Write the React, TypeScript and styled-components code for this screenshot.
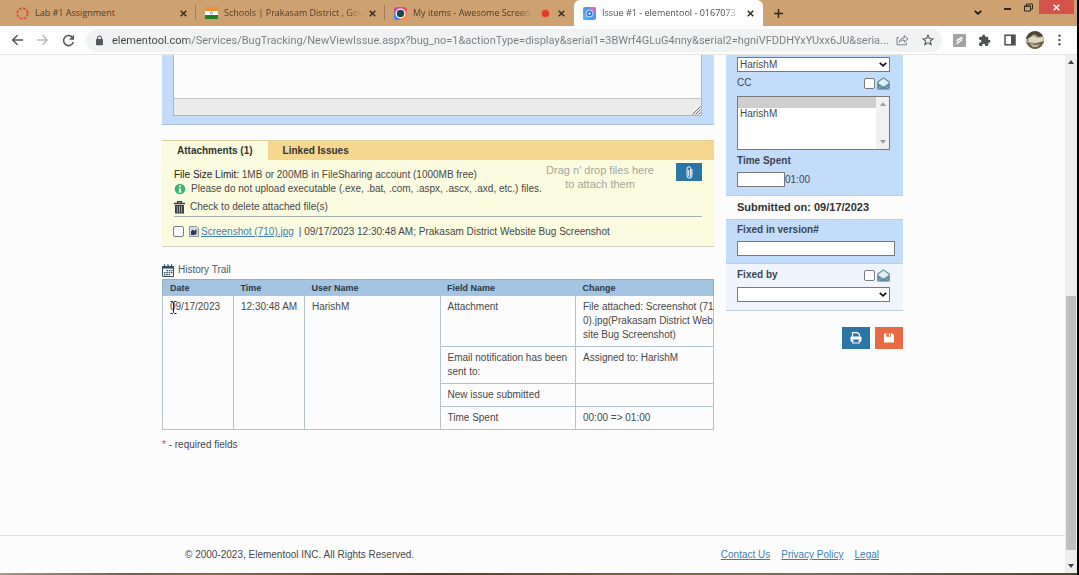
import React from "react";
import styled, { createGlobalStyle } from "styled-components";

const GlobalStyle = createGlobalStyle`
  *, *::before, *::after { box-sizing: border-box; }
  body { margin: 0; background: #fcfcfd; }
  button, input, select, textarea { font: inherit; color: inherit; margin: 0; border-radius: 0; }
  button { border: 0; padding: 0; background: none; }
`;

const arial = `"Liberation Sans", Arial, sans-serif`;

const Desktop = styled.div`
  min-height: 100vh;
  display: flex;
  flex-direction: column;
  border-right: 2px solid #000;
  font: 10px/14px ${arial};
  color: #484848;
`;

/* ---------- browser chrome ---------- */

const TabStrip = styled.div`
  display: flex;
  align-items: stretch;
  height: 26px;
  padding-left: 7px;
  background: #cda270;
  color: #4d3c2a;
  font: 9px/14px "Open Sans", "Noto Sans", sans-serif;
`;

const Tab = styled.div<{ $active?: boolean; $divider?: boolean }>`
  position: relative;
  flex: 0 1 189px;
  min-width: 0;
  display: flex;
  align-items: center;
  gap: 6px;
  padding: 0 9px 0 9px;
  background: ${(p) => (p.$active ? "#fdfdfd" : "transparent")};
  color: ${(p) => (p.$active ? "#4f4f52" : "inherit")};
  border-radius: 6px 6px 0 0;
  &::after {
    content: "";
    display: ${(p) => (p.$divider ? "block" : "none")};
    position: absolute;
    right: 0;
    top: 5px;
    height: 15px;
    width: 1px;
    background: #a17e56;
  }
`;

const TabTitle = styled.span<{ $fade?: boolean }>`
  flex: 1;
  min-width: 0;
  white-space: nowrap;
  mask-image: ${(p) => (p.$fade ? "linear-gradient(90deg, #000 calc(100% - 16px), transparent)" : "none")};
`;

const IconButton = styled.button<{ $w?: number }>`
  display: flex;
  align-items: center;
  justify-content: center;
  flex: none;
  width: ${(p) => p.$w ?? 8}px;
`;

const WindowControls = styled.div`
  display: flex;
  align-items: flex-start;
  margin-left: auto;
  padding-right: 3px;
`;

const WindowButton = styled(IconButton)<{ $close?: boolean; $tall?: boolean }>`
  height: ${(p) => (p.$tall ? 25 : 14)}px;
  background: ${(p) => (p.$close ? "#d4544b" : "none")};
`;

const Toolbar = styled.div`
  display: flex;
  align-items: center;
  height: 29px;
  padding: 0 7px 0 5px;
  background: #fdfdfd;
  border-bottom: 1px solid #e6e6e6;
  color: #5c5f62;
`;

const AddressBar = styled.div`
  flex: 1;
  min-width: 0;
  display: flex;
  align-items: center;
  height: 23px;
  margin: 0 5px 0 5px;
  padding: 0 2px 0 9px;
  border-radius: 12px;
  background: #f1f3f2;
`;

const Url = styled.input`
  flex: 1;
  min-width: 0;
  height: 20px;
  margin-left: 8px;
  padding: 1px 0 0;
  border: 0;
  outline: 0;
  font: 11px/18px Roboto, "Open Sans", sans-serif;
  color: transparent;
  background: linear-gradient(90deg, #3f4144 77px, #777b7e 77px);
  background-clip: text;
`;

const Avatar = styled.span`
  display: block;
  width: 18px;
  height: 18px;
  border-radius: 50%;
  overflow: hidden;
`;

/* ---------- page ---------- */

const Viewport = styled.div`
  flex: 1;
  display: flex;
`;

const Page = styled.div`
  flex: 1;
  min-width: 0;
  display: flex;
  flex-direction: column;
  background: #fcfcfd;
`;

const Columns = styled.main`
  width: 100%;
  max-width: 741px;
  margin: 0 auto;
  display: flex;
  gap: 12px;
`;

const MainColumn = styled.div`
  flex: 1;
  min-width: 0;
`;

const SideColumn = styled.aside`
  flex: 0 0 177px;
`;

const DescriptionPanel = styled.section`
  background: #c2dcfa;
  border-bottom: 1px solid #a9c0d8;
  padding: 0 12px 8px 11px;
`;

const Editor = styled.div`
  border: 1px solid #a8b6c4;
  border-top: 0;
`;

const EditorText = styled.textarea`
  display: block;
  width: 100%;
  height: 43px;
  border: 0;
  resize: none;
  background: #fcfcfd;
`;

const EditorFooter = styled.div`
  display: flex;
  justify-content: flex-end;
  align-items: flex-end;
  height: 17px;
  border-top: 1px solid #c4c4c4;
  background: #ebebeb;
`;

const Attachments = styled.section`
  margin-top: 15px;
  background: #fbfbdf;
  border-top: 1px solid #dccb9c;
  border-bottom: 1px solid #cfcfc0;
`;

const PanelTabs = styled.div`
  display: flex;
  height: 19px;
  background: #f5d78f;
`;

const PanelTab = styled.button<{ $active?: boolean }>`
  padding: 0 15px;
  font-weight: bold;
  color: #333;
  background: ${(p) => (p.$active ? "#fbfbdf" : "transparent")};
`;

const UploadArea = styled.div`
  display: flex;
  align-items: flex-start;
  margin: 0 12px;
  padding: 3px 0 2px;
  border-bottom: 1px solid #a9b0ae;
`;

const UploadNotes = styled.div`
  flex: 1;
  padding-top: 5px;
`;

const Line = styled.div<{ $gap?: number; $top?: number }>`
  display: flex;
  align-items: center;
  gap: ${(p) => p.$gap ?? 5}px;
  margin-top: ${(p) => p.$top ?? 0}px;
`;

const Strong = styled.span`
  color: #222;
`;

const DropHint = styled.div`
  margin: 0 22px 0 0;
  font-size: 11px;
  text-align: center;
  color: #a5a69c;
`;

const ActionButton = styled.button<{ $tone?: string; $small?: boolean }>`
  display: flex;
  align-items: center;
  justify-content: center;
  width: ${(p) => (p.$small ? 26 : 28)}px;
  height: ${(p) => (p.$small ? 18 : 22)}px;
  background: ${(p) => p.$tone ?? "#2c76a5"};
`;

const FileRow = styled.div`
  display: flex;
  align-items: center;
  gap: 5px;
  height: 29px;
  padding: 0 11px;
`;

const CheckBox = styled.input.attrs({ type: "checkbox" })`
  appearance: none;
  flex: none;
  width: 11px;
  height: 11px;
  background: #fff;
  border: 1px solid #77797c;
  border-radius: 2px;
`;

const FileName = styled.span`
  display: flex;
  align-items: center;
  gap: 2px;
`;

const Link = styled.a`
  color: #3f7fb0;
  text-decoration: underline;
`;

const HistoryHeading = styled.h2`
  display: flex;
  align-items: center;
  gap: 4px;
  height: 14px;
  margin: 16px 0 2px;
  font-size: 10px;
  font-weight: normal;
  color: #4b5966;
`;

const HistoryTable = styled.table`
  width: 100%;
  table-layout: fixed;
  border-collapse: collapse;
  border: 1px solid #93aec2;
`;

const Th = styled.th<{ $w?: string }>`
  width: ${(p) => p.$w ?? "auto"};
  height: 16px;
  padding: 0 7px;
  font-size: 9px;
  text-align: left;
  background: #a4c3e0;
  color: #2a3a48;
`;

const Td = styled.td`
  position: relative;
  padding: 4px 0 4px 7px;
  vertical-align: top;
  border: 1px solid #b3c4d0;
`;

const ChangeTd = styled(Td)`
  white-space: pre;
`;

const Caret = styled.svg`
  position: absolute;
  left: 7px;
  top: 5px;
`;

const Required = styled.p`
  margin: 8px 0;
  & > span { color: #e03c31; }
`;

const SideBlock = styled.section<{ $light?: boolean; $pad: string }>`
  padding: ${(p) => p.$pad};
  background: ${(p) => (p.$light ? "#f0f5fd" : "#c2dcfa")};
  border-bottom: 1px solid #bccddd;
`;

const FieldHeader = styled.div<{ $plain?: boolean }>`
  display: flex;
  align-items: center;
  justify-content: space-between;
  height: 14px;
  font-weight: ${(p) => (p.$plain ? "normal" : "bold")};
  color: #3a4653;
`;

const Notify = styled.span`
  display: flex;
  align-items: center;
  align-self: flex-end;
  gap: 2px;
`;

const SelectFrame = styled.div`
  position: relative;
  height: 15px;
  & > svg { position: absolute; right: 3px; top: 5px; pointer-events: none; }
`;

const Select = styled.select`
  display: block;
  appearance: none;
  width: 100%;
  height: 15px;
  padding: 0 2px;
  background: #fff;
  border: 1px solid #76797c;
`;

const ListFrame = styled.div`
  display: flex;
  height: 54px;
  margin: 6px 0 4px;
  background: #fff;
  border: 1px solid #76797c;
`;

const ListBox = styled.select`
  flex: 1;
  min-width: 0;
  padding: 0;
  border: 0;
  outline: 0;
  overflow: hidden;
  background: transparent;
  & option { height: 11px; min-height: 11px; padding: 0 2px; line-height: 11px; }
`;

const ListScroll = styled.div`
  display: flex;
  flex-direction: column;
  justify-content: space-between;
  align-items: center;
  width: 13px;
  padding: 5px 0;
  background: #f1f1f1;
`;

const TextBox = styled.input<{ $w?: string }>`
  width: ${(p) => p.$w ?? "100%"};
  height: 15px;
  padding: 0 2px;
  background: #fff;
  border: 1px solid #76797c;
`;

const Submitted = styled.p`
  margin: 0;
  padding: 4px 11px 5px;
  font-size: 11px;
  font-weight: bold;
  color: #333;
  border-bottom: 1px solid #bccddd;
`;

const Actions = styled.div`
  display: flex;
  justify-content: flex-end;
  gap: 5px;
  margin-top: 16px;
`;

const Footer = styled.footer`
  margin-top: auto;
  border-top: 1px solid #e3e3e4;
`;

const FooterInner = styled.div`
  display: flex;
  justify-content: space-between;
  max-width: 741px;
  margin: 0 auto;
  padding: 12px 24px 11px 23px;
`;

const FooterLinks = styled.nav`
  display: flex;
  gap: 11px;
`;

const PageScroll = styled.div`
  display: flex;
  flex-direction: column;
  align-items: center;
  width: 12px;
  padding: 5px 0;
  background: #eeeeef;
`;

const Track = styled.div`
  flex: 1;
  display: flex;
  flex-direction: column;
  justify-content: flex-end;
  width: 10px;
  padding: 6px 0 14px;
`;

const Thumb = styled.div`
  height: 53%;
  background: #bfbfc0;
`;

const TaskbarEdge = styled.div`
  height: 2px;
  background: linear-gradient(90deg, #a59a86, #6f604d 12%, #8a6a3a 20%, #5a4028 40%, #7d6a3c 62%, #77705f 75%, #4d4a2c);
`;

/* ---------- icons ---------- */

const Close = ({ color = "#33281c" }: { color?: string }) => (
  <svg width="7" height="7" viewBox="0 0 7 7"><path d="M.7.7l5.6 5.6M6.3.7L.7 6.3" stroke={color} strokeWidth="1.4" /></svg>
);

const Triangle = ({ down, color = "#444" }: { down?: boolean; color?: string }) => (
  <svg width="6" height="4" viewBox="0 0 6 4"><path d={down ? "M0 0h6L3 4z" : "M0 4h6L3 0z"} fill={color} /></svg>
);

const Chevron = () => (
  <svg width="8" height="5" viewBox="0 0 8 5"><path d="M.8.8L4 3.8 7.2.8" fill="none" stroke="#111" strokeWidth="1.7" /></svg>
);

const Envelope = () => (
  <svg width="13" height="13" viewBox="0 0 13 13">
    <path d="M.8 5L6.5.9 12.2 5v7H.8z" fill="#e2eff6" stroke="#5d8496" strokeWidth="1.1" strokeLinejoin="round" />
    <path d="M.8 6v6.200h11.400V6L6.500 9.600z" fill="#5d8ba0" />
    <path d="M1 12l3.800-3.200M12 12L8.200 8.800" stroke="#a9c6d4" strokeWidth=".7" />
  </svg>
);

const Canvas = () => (
  <svg width="13" height="13" viewBox="0 0 13 13">
    <circle cx="6.5" cy="6.5" r="5.2" fill="none" stroke="#e0533a" strokeWidth="2" strokeDasharray="2.8 1.28" />
  </svg>
);

const Flag = () => (
  <svg width="13" height="12" viewBox="0 0 13 12">
    <path d="M0 0h13v4H0z" fill="#f6902f" /><path d="M0 4h13v4H0z" fill="#fff" /><path d="M0 8h13v4H0z" fill="#1c8222" />
    <circle cx="6.5" cy="6" r="1.1" fill="none" stroke="#6f80b8" strokeWidth=".7" />
  </svg>
);

const Awesome = () => (
  <svg width="13" height="13" viewBox="0 0 13 13">
    <defs><linearGradient id="aw" x1="0" y1="0" x2="1" y2="1"><stop offset="0" stopColor="#b04bd8" /><stop offset=".5" stopColor="#ef4b6a" /><stop offset="1" stopColor="#f7a93b" /></linearGradient></defs>
    <rect width="13" height="13" rx="3" fill="url(#aw)" /><path d="M0 6v4a3 3 0 003 3h3z" fill="#3d8df0" />
    <circle cx="6.5" cy="6.5" r="5" fill="#fff" /><circle cx="6.5" cy="6.5" r="3.7" fill="#24464b" />
  </svg>
);

const Elementool = () => (
  <svg width="13" height="13" viewBox="0 0 13 13">
    <rect width="13" height="13" rx="2" fill="#4d9bf0" /><path d="M5 0h6a2 2 0 012 2v5z" fill="#d667c4" /><path d="M0 5v6a2 2 0 002 2h4z" fill="#4fb8ea" />
    <circle cx="6.5" cy="6.5" r="3.4" fill="#2f6fe8" stroke="#a9d3fb" strokeWidth="1.2" /><circle cx="6.5" cy="6.5" r="1.2" fill="#d7ecff" />
  </svg>
);

const Recording = () => (
  <svg width="11" height="11" viewBox="0 0 11 11"><circle cx="5.5" cy="5.5" r="4.8" fill="#e08a60" /><circle cx="5.5" cy="5.5" r="3.6" fill="#df3a22" /></svg>
);

const Arrow = ({ forward }: { forward?: boolean }) => (
  <svg width="13" height="12" viewBox="0 0 13 12">
    <path d={forward ? "M1 6h10M6.5 1.2L11.3 6l-4.8 4.8" : "M12 6H2M6.5 1.2L1.7 6l4.8 4.8"} fill="none" stroke={forward ? "#b9bbbd" : "#55585b"} strokeWidth="1.5" />
  </svg>
);

const Reload = () => (
  <svg width="13" height="13" viewBox="0 0 13 13"><path d="M10.6 3.6A5 5 0 1011.4 8" fill="none" stroke="#55585b" strokeWidth="1.5" /><path d="M12 .8v5H7z" fill="#55585b" /></svg>
);

const Lock = () => (
  <svg width="9" height="11" viewBox="0 0 9 11"><rect x="1" y="4" width="7" height="6.3" rx=".8" fill="#55585b" /><path d="M2.6 4.4V2.9a1.9 1.9 0 013.8 0v1.5" fill="none" stroke="#55585b" strokeWidth="1.1" /></svg>
);

const Share = () => (
  <svg width="13" height="12" viewBox="0 0 13 12"><path d="M3 3.5H1v7.3h9.4V8.6" fill="none" stroke="#7a7d80" /><path d="M3.4 8.3C3.8 5.4 5.5 4 8.2 3.9V1.6L12 5 8.2 8.2V6C6.200 6 4.600 6.600 3.400 8.300z" fill="none" stroke="#7a7d80" strokeLinejoin="round" /></svg>
);

const Star = () => (
  <svg width="12" height="12" viewBox="0 0 24 24"><path d="M12 2.500l2.900 6.600 7.100.6-5.400 4.700 1.600 7L12 17.700l-6.200 3.700 1.600-7L2 9.700l7.100-.6z" fill="none" stroke="#55585b" strokeWidth="2.200" /></svg>
);

const Extension = () => (
  <svg width="13" height="13" viewBox="0 0 13 13"><rect width="13" height="13" rx="1" fill="#a2a3a4" /><path d="M3.500 5.800L9.300 2.500v2.300L3.500 7.600zM9.500 6.300L3.700 10.600V8.500l5.800-3.200z" fill="#fff" /></svg>
);

const Puzzle = () => (
  <svg width="13" height="13" viewBox="0 0 24 24"><path d="M20.500 11H19V7a2 2 0 00-2-2h-4V3.500a2.500 2.500 0 00-5 0V5H4a2 2 0 00-2 2v3.800h1.500a2.700 2.700 0 010 5.400H2V20a2 2 0 002 2h3.800v-1.500a2.700 2.700 0 015.400 0V22H17a2 2 0 002-2v-4h1.500a2.500 2.500 0 000-5z" fill="#4f5255" /></svg>
);

const SidePanel = () => (
  <svg width="12" height="12" viewBox="0 0 12 12"><rect x="1" y="1.200" width="10" height="9.600" fill="none" stroke="#4f5255" strokeWidth="1.500" /><path d="M7 1h4v10H7z" fill="#4f5255" /></svg>
);

const Dots = () => (
  <svg width="3" height="12" viewBox="0 0 3 12"><circle cx="1.500" cy="1.700" r="1.200" fill="#55585b" /><circle cx="1.500" cy="6" r="1.200" fill="#55585b" /><circle cx="1.500" cy="10.300" r="1.200" fill="#55585b" /></svg>
);

const Portrait = () => (
  <svg width="18" height="18" viewBox="0 0 18 18">
    <path d="M0 0h18v18H0z" fill="#aca08c" /><path d="M0 0h18v5L13 6 8 3 3 7 0 8z" fill="#4c4437" /><path d="M3 7l4-2 4 2 6-1v4l-7 2-7-1z" fill="#dfd6c4" /><path d="M0 11l6 2 6-1 6-2v8H0z" fill="#6b5f4e" /><path d="M4 13l6 1 4-1-3 3H7z" fill="#c7b9a1" />
  </svg>
);

const Info = () => (
  <svg width="12" height="12" viewBox="0 0 12 12"><circle cx="6" cy="6" r="5.300" fill="#3eb573" /><circle cx="6" cy="3.300" r="1" fill="#fff" /><path d="M4.600 5.200h2.200v3.400h.8v.9H4.500v-.9h.7V6.100h-.6z" fill="#fff" /></svg>
);

const Trash = () => (
  <svg width="11" height="13" viewBox="0 0 11 13"><path d="M0 2.500h11M3.600 2.200V.7h3.800v1.500" fill="none" stroke="#363b45" strokeWidth="1.300" /><path d="M1 4h9v8.500H1z" fill="#363b45" /><path d="M3.300 5v6.500M5.500 5v6.500M7.700 5v6.500" stroke="#c8c9bc" strokeWidth=".8" /></svg>
);

const ImageFile = () => (
  <svg width="10" height="11" viewBox="0 0 10 11"><path d="M.5.500h7l2 2v8h-9z" fill="#d9dde3" stroke="#8d95a0" /><path d="M2 9V5l2-1.500 1 1.500 2.500-2V8L5 9z" fill="#2f3c55" /></svg>
);

const Clip = () => (
  <svg width="7" height="13" viewBox="0 0 7 13"><path d="M5.900 3v6.800a2.400 2.400 0 01-4.800 0V2.600a1.800 1.800 0 013.600 0v6.800a1 1 0 01-2 0V4" fill="none" stroke="#fff" strokeWidth="1" /></svg>
);

const Calendar = () => (
  <svg width="12" height="13" viewBox="0 0 12 13">
    <path d="M.5 2.500h11v10H.5z" fill="#f3f6f8" stroke="#34505f" />
    <path d="M0 2h12v2.600H0z" fill="#34505f" />
    <path d="M2.500.3v2.500M6 .3v2.500M9.500.3v2.500" stroke="#34505f" strokeWidth="1.300" />
    <path d="M4.500 6.600h6M2 8.600h8.500M2 10.600h6" stroke="#34505f" strokeWidth="1.100" strokeDasharray="1.500 .8" />
  </svg>
);

const Printer = () => (
  <svg width="12" height="12" viewBox="0 0 12 12"><path d="M2.500 5V.700h5L9.500 2.500V5" fill="none" stroke="#fff" strokeWidth="1.200" /><path d="M.5 5.500a1 1 0 011-1h9a1 1 0 011 1v4h-2v-2h-7v2h-2z" fill="#fff" /><path d="M2.800 8v3h6.400V8" fill="none" stroke="#fff" strokeWidth="1.200" /></svg>
);

const Save = () => (
  <svg width="10" height="10" viewBox="0 0 10 10"><path d="M0 .5h8.500L10 2v7.500H0z" fill="#fff" /><path d="M2.300.5h4.800v3.200H2.300z" fill="#e86a45" /><path d="M4.900 1h1.300v2.200H4.900z" fill="#fff" /></svg>
);

const Grip = () => (
  <svg width="9" height="9" viewBox="0 0 9 9"><path d="M.5 8.500l8-8M3.500 8.500l5-5M6.500 8.500l2-2" stroke="#6d6d6d" /></svg>
);

/* ---------- data ---------- */

const tabs = [
  { title: "Lab #1 Assignment", icon: <Canvas />, divider: true },
  { title: "Schools | Prakasam District , Gov", icon: <Flag />, divider: true, fade: true },
  { title: "My items - Awesome Screen", icon: <Awesome />, recording: true, fade: true },
  { title: "Issue #1 - elementool - 0167073", icon: <Elementool />, active: true, fade: true },
];

const changes = [
  ["Attachment", "File attached: Screenshot (71\n0).jpg(Prakasam District Web\nsite Bug Screenshot)"],
  ["Email notification has been sent to:", "Assigned to: HarishM"],
  ["New issue submitted", ""],
  ["Time Spent", "00:00 => 01:00"],
];

function BrowserBars() {
  return (
    <header>
      <TabStrip>
        {tabs.map((t) => (
          <Tab key={t.title} $active={t.active} $divider={t.divider}>
            {t.icon}
            <TabTitle $fade={t.fade}>{t.title}</TabTitle>
            {t.recording && <Recording />}
            <IconButton aria-label="Close tab"><Close /></IconButton>
          </Tab>
        ))}
        <IconButton $w={30} aria-label="New tab">
          <svg width="9" height="9" viewBox="0 0 9 9"><path d="M4.500 0v9M0 4.500h9" stroke="#33281c" strokeWidth="1.500" /></svg>
        </IconButton>
        <WindowControls>
          <WindowButton $w={36} $tall aria-label="Search tabs"><Chevron /></WindowButton>
          <WindowButton $w={22} aria-label="Minimize">
            <svg width="7" height="8" viewBox="0 0 7 8"><path d="M0 6h7" stroke="#33281c" strokeWidth="2" /></svg>
          </WindowButton>
          <WindowButton $w={21} aria-label="Restore">
            <svg width="9" height="9" viewBox="0 0 9 9"><path d="M.5 3h6v5h-6zM2.500 3V1h6v5h-2" fill="none" stroke="#33281c" /><path d="M.5 3.200h6" stroke="#33281c" /></svg>
          </WindowButton>
          <WindowButton $w={35} $close aria-label="Close window"><Close color="#fff" /></WindowButton>
        </WindowControls>
      </TabStrip>
      <Toolbar>
        <IconButton $w={25} aria-label="Back"><Arrow /></IconButton>
        <IconButton $w={25} aria-label="Forward"><Arrow forward /></IconButton>
        <IconButton $w={26} aria-label="Reload"><Reload /></IconButton>
        <AddressBar>
          <Lock />
          <Url
            aria-label="Address"
            readOnly
            value="elementool.com/Services/BugTracking/NewViewIssue.aspx?bug_no=1&actionType=display&serial1=3BWrf4GLuG4nny&serial2=hgniVFDDHYxYUxx6JU&seria..."
          />
          <IconButton $w={25} aria-label="Share"><Share /></IconButton>
          <IconButton $w={25} aria-label="Bookmark"><Star /></IconButton>
        </AddressBar>
        <IconButton $w={25} aria-label="Extension"><Extension /></IconButton>
        <IconButton $w={25} aria-label="Extensions"><Puzzle /></IconButton>
        <IconButton $w={25} aria-label="Side panel"><SidePanel /></IconButton>
        <IconButton $w={26} aria-label="Profile"><Avatar><Portrait /></Avatar></IconButton>
        <IconButton $w={22} aria-label="Menu"><Dots /></IconButton>
      </Toolbar>
    </header>
  );
}

function History() {
  return (
    <section>
      <HistoryHeading><Calendar />History Trail</HistoryHeading>
      <HistoryTable>
        <thead>
          <tr>
            <Th $w="71px">Date</Th>
            <Th $w="71px">Time</Th>
            <Th>User Name</Th>
            <Th>Field Name</Th>
            <Th $w="138px">Change</Th>
          </tr>
        </thead>
        <tbody>
          {changes.map(([field, change], i) => (
            <tr key={field}>
              {i === 0 && (
                <>
                  <Td rowSpan={4}>
                    09/17/2023
                    <Caret width="7" height="13" viewBox="0 0 7 13"><path d="M.5.500h2l1 1 1-1h2M3.500 1.500v10M.5 12.500h2l1-1 1 1h2" fill="none" stroke="#222" /></Caret>
                  </Td>
                  <Td rowSpan={4}>12:30:48 AM</Td>
                  <Td rowSpan={4}>HarishM</Td>
                </>
              )}
              <Td>{field}</Td>
              <ChangeTd>{change}</ChangeTd>
            </tr>
          ))}
        </tbody>
      </HistoryTable>
      <Required><span>*</span> - required fields</Required>
    </section>
  );
}

function Sidebar() {
  return (
    <SideColumn>
      <SideBlock $pad="2px 13px 8px 11px">
        <SelectFrame>
          <Select aria-label="Assigned to"><option>HarishM</option></Select>
          <Chevron />
        </SelectFrame>
        <Line $top={4} />
        <FieldHeader $plain>
          <label htmlFor="cc">CC</label>
          <Notify><CheckBox aria-label="Notify CC" /><Envelope /></Notify>
        </FieldHeader>
        <ListFrame>
          <ListBox id="cc" multiple size={4} defaultValue={[""]}>
            <option value="" />
            <option>HarishM</option>
          </ListBox>
          <ListScroll><Triangle color="#a0a0a0" /><Triangle down color="#a0a0a0" /></ListScroll>
        </ListFrame>
        <FieldHeader><label htmlFor="spent">Time Spent</label></FieldHeader>
        <Line $gap={0} $top={4}><TextBox id="spent" $w="48px" />01:00</Line>
      </SideBlock>
      <Submitted>Submitted on: 09/17/2023</Submitted>
      <SideBlock $pad="3px 8px 7px 11px">
        <FieldHeader><label htmlFor="version">Fixed in version#</label></FieldHeader>
        <Line $top={4}><TextBox id="version" /></Line>
      </SideBlock>
      <SideBlock $light $pad="4px 13px 8px 11px">
        <FieldHeader>
          <label htmlFor="fixedby">Fixed by</label>
          <Notify><CheckBox aria-label="Notify fixer" /><Envelope /></Notify>
        </FieldHeader>
        <Line $top={5} />
        <SelectFrame>
          <Select id="fixedby"><option> </option></Select>
          <Chevron />
        </SelectFrame>
      </SideBlock>
      <Actions>
        <ActionButton aria-label="Print"><Printer /></ActionButton>
        <ActionButton $tone="#e86a45" aria-label="Save"><Save /></ActionButton>
      </Actions>
    </SideColumn>
  );
}

export default function App() {
  return (
    <Desktop>
      <GlobalStyle />
      <BrowserBars />
      <Viewport>
        <Page>
          <Columns>
            <MainColumn>
              <DescriptionPanel>
                <Editor>
                  <EditorText aria-label="Description" />
                  <EditorFooter><Grip /></EditorFooter>
                </Editor>
              </DescriptionPanel>
              <Attachments>
                <PanelTabs>
                  <PanelTab $active>Attachments (1)</PanelTab>
                  <PanelTab>Linked Issues</PanelTab>
                </PanelTabs>
                <UploadArea>
                  <UploadNotes>
                    <div><Strong>File Size Limit:</Strong> 1MB or 200MB in FileSharing account (1000MB free)</div>
                    <Line><Info />Please do not upload executable (.exe, .bat, .com, .aspx, .ascx, .axd, etc.) files.</Line>
                    <Line $top={4}><Trash />Check to delete attached file(s)</Line>
                  </UploadNotes>
                  <DropHint>Drag n' drop files here<br />to attach them</DropHint>
                  <ActionButton $small aria-label="Attach file"><Clip /></ActionButton>
                </UploadArea>
                <FileRow>
                  <CheckBox aria-label="Delete Screenshot (710).jpg" />
                  <FileName><ImageFile /><Link href="#file">Screenshot (710).jpg</Link></FileName>
                  <span>| 09/17/2023 12:30:48 AM; Prakasam District Website Bug Screenshot</span>
                </FileRow>
              </Attachments>
              <History />
            </MainColumn>
            <Sidebar />
          </Columns>
          <Footer>
            <FooterInner>
              <span>© 2000-2023, Elementool INC. All Rights Reserved.</span>
              <FooterLinks>
                <Link href="#contact">Contact Us</Link>
                <Link href="#privacy">Privacy Policy</Link>
                <Link href="#legal">Legal</Link>
              </FooterLinks>
            </FooterInner>
          </Footer>
        </Page>
        <PageScroll>
          <Triangle />
          <Track><Thumb /></Track>
          <Triangle down />
        </PageScroll>
      </Viewport>
      <TaskbarEdge />
    </Desktop>
  );
}
